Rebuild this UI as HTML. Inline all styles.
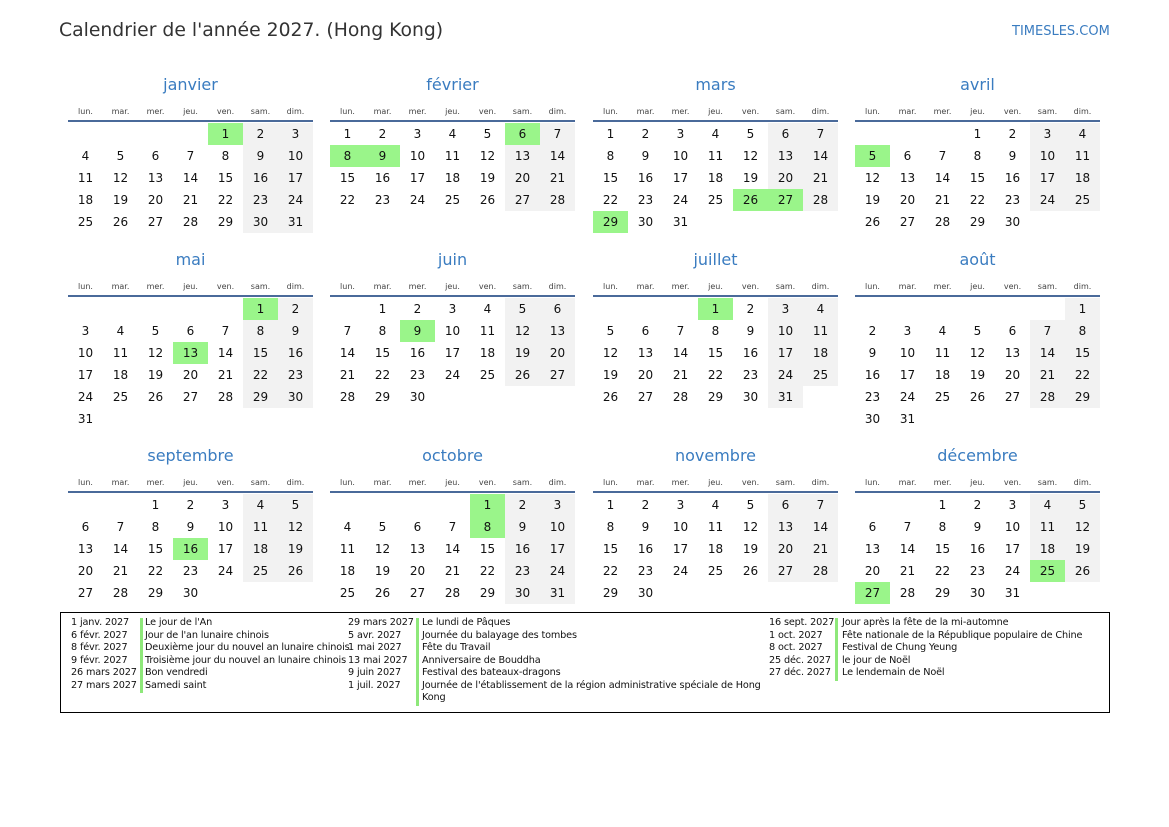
<!DOCTYPE html>
<html><head><meta charset="utf-8"><style>
*{margin:0;padding:0;box-sizing:border-box}
body{width:1169px;height:827px;background:#fff;position:relative;font-family:"DejaVu Sans","Liberation Sans",sans-serif;color:#111;overflow:hidden}
.ttl{position:absolute;left:59px;top:20px;font-size:18.8px;color:#333}
.site{position:absolute;left:1012px;top:24px;font-size:13px;color:#3a7cc0}
.m{position:absolute;width:245px}
.m h2{font-weight:normal;font-size:16px;color:#3a7cc0;text-align:center;height:20px;line-height:20px;margin-top:-10px}
.lb{display:flex;font-size:8px;color:#444;margin-top:12px;height:10px;line-height:10px}
.lb span{width:35px;text-align:center}
.ln{height:2px;background:#4a6a9a;margin-top:3px}
.g{display:flex;flex-wrap:wrap;width:245px;margin-top:1px}
.g i{font-style:normal;width:35px;height:22px;line-height:22px;text-align:center;font-size:12px}
.g i:nth-child(7n+6):not(:empty),.g i:nth-child(7n):not(:empty){background:#f2f2f2}
.g i.h{background:#9af58a!important}
.leg{position:absolute;left:60px;top:612px;width:1050px;height:101px;border:1px solid #000}
.r{position:absolute;font-size:9.7px;letter-spacing:-0.15px;white-space:nowrap;line-height:12.5px}
.b{position:absolute;width:3px;background:#8ee87a}
</style></head><body>
<div class="ttl">Calendrier de l'année 2027. (Hong Kong)</div>
<div class="site">TIMESLES.COM</div>

<div class="m" style="left:68px;top:85px"><h2>janvier</h2><div class="lb"><span>lun.</span><span>mar.</span><span>mer.</span><span>jeu.</span><span>ven.</span><span>sam.</span><span>dim.</span></div><div class="ln"></div><div class="g"><i></i><i></i><i></i><i></i><i class="h">1</i><i>2</i><i>3</i><i>4</i><i>5</i><i>6</i><i>7</i><i>8</i><i>9</i><i>10</i><i>11</i><i>12</i><i>13</i><i>14</i><i>15</i><i>16</i><i>17</i><i>18</i><i>19</i><i>20</i><i>21</i><i>22</i><i>23</i><i>24</i><i>25</i><i>26</i><i>27</i><i>28</i><i>29</i><i>30</i><i>31</i></div></div>

<div class="m" style="left:330px;top:85px"><h2>février</h2><div class="lb"><span>lun.</span><span>mar.</span><span>mer.</span><span>jeu.</span><span>ven.</span><span>sam.</span><span>dim.</span></div><div class="ln"></div><div class="g"><i>1</i><i>2</i><i>3</i><i>4</i><i>5</i><i class="h">6</i><i>7</i><i class="h">8</i><i class="h">9</i><i>10</i><i>11</i><i>12</i><i>13</i><i>14</i><i>15</i><i>16</i><i>17</i><i>18</i><i>19</i><i>20</i><i>21</i><i>22</i><i>23</i><i>24</i><i>25</i><i>26</i><i>27</i><i>28</i></div></div>

<div class="m" style="left:593px;top:85px"><h2>mars</h2><div class="lb"><span>lun.</span><span>mar.</span><span>mer.</span><span>jeu.</span><span>ven.</span><span>sam.</span><span>dim.</span></div><div class="ln"></div><div class="g"><i>1</i><i>2</i><i>3</i><i>4</i><i>5</i><i>6</i><i>7</i><i>8</i><i>9</i><i>10</i><i>11</i><i>12</i><i>13</i><i>14</i><i>15</i><i>16</i><i>17</i><i>18</i><i>19</i><i>20</i><i>21</i><i>22</i><i>23</i><i>24</i><i>25</i><i class="h">26</i><i class="h">27</i><i>28</i><i class="h">29</i><i>30</i><i>31</i></div></div>

<div class="m" style="left:855px;top:85px"><h2>avril</h2><div class="lb"><span>lun.</span><span>mar.</span><span>mer.</span><span>jeu.</span><span>ven.</span><span>sam.</span><span>dim.</span></div><div class="ln"></div><div class="g"><i></i><i></i><i></i><i>1</i><i>2</i><i>3</i><i>4</i><i class="h">5</i><i>6</i><i>7</i><i>8</i><i>9</i><i>10</i><i>11</i><i>12</i><i>13</i><i>14</i><i>15</i><i>16</i><i>17</i><i>18</i><i>19</i><i>20</i><i>21</i><i>22</i><i>23</i><i>24</i><i>25</i><i>26</i><i>27</i><i>28</i><i>29</i><i>30</i></div></div>

<div class="m" style="left:68px;top:260px"><h2>mai</h2><div class="lb"><span>lun.</span><span>mar.</span><span>mer.</span><span>jeu.</span><span>ven.</span><span>sam.</span><span>dim.</span></div><div class="ln"></div><div class="g"><i></i><i></i><i></i><i></i><i></i><i class="h">1</i><i>2</i><i>3</i><i>4</i><i>5</i><i>6</i><i>7</i><i>8</i><i>9</i><i>10</i><i>11</i><i>12</i><i class="h">13</i><i>14</i><i>15</i><i>16</i><i>17</i><i>18</i><i>19</i><i>20</i><i>21</i><i>22</i><i>23</i><i>24</i><i>25</i><i>26</i><i>27</i><i>28</i><i>29</i><i>30</i><i>31</i></div></div>

<div class="m" style="left:330px;top:260px"><h2>juin</h2><div class="lb"><span>lun.</span><span>mar.</span><span>mer.</span><span>jeu.</span><span>ven.</span><span>sam.</span><span>dim.</span></div><div class="ln"></div><div class="g"><i></i><i>1</i><i>2</i><i>3</i><i>4</i><i>5</i><i>6</i><i>7</i><i>8</i><i class="h">9</i><i>10</i><i>11</i><i>12</i><i>13</i><i>14</i><i>15</i><i>16</i><i>17</i><i>18</i><i>19</i><i>20</i><i>21</i><i>22</i><i>23</i><i>24</i><i>25</i><i>26</i><i>27</i><i>28</i><i>29</i><i>30</i></div></div>

<div class="m" style="left:593px;top:260px"><h2>juillet</h2><div class="lb"><span>lun.</span><span>mar.</span><span>mer.</span><span>jeu.</span><span>ven.</span><span>sam.</span><span>dim.</span></div><div class="ln"></div><div class="g"><i></i><i></i><i></i><i class="h">1</i><i>2</i><i>3</i><i>4</i><i>5</i><i>6</i><i>7</i><i>8</i><i>9</i><i>10</i><i>11</i><i>12</i><i>13</i><i>14</i><i>15</i><i>16</i><i>17</i><i>18</i><i>19</i><i>20</i><i>21</i><i>22</i><i>23</i><i>24</i><i>25</i><i>26</i><i>27</i><i>28</i><i>29</i><i>30</i><i>31</i></div></div>

<div class="m" style="left:855px;top:260px"><h2>août</h2><div class="lb"><span>lun.</span><span>mar.</span><span>mer.</span><span>jeu.</span><span>ven.</span><span>sam.</span><span>dim.</span></div><div class="ln"></div><div class="g"><i></i><i></i><i></i><i></i><i></i><i></i><i>1</i><i>2</i><i>3</i><i>4</i><i>5</i><i>6</i><i>7</i><i>8</i><i>9</i><i>10</i><i>11</i><i>12</i><i>13</i><i>14</i><i>15</i><i>16</i><i>17</i><i>18</i><i>19</i><i>20</i><i>21</i><i>22</i><i>23</i><i>24</i><i>25</i><i>26</i><i>27</i><i>28</i><i>29</i><i>30</i><i>31</i></div></div>

<div class="m" style="left:68px;top:456px"><h2>septembre</h2><div class="lb"><span>lun.</span><span>mar.</span><span>mer.</span><span>jeu.</span><span>ven.</span><span>sam.</span><span>dim.</span></div><div class="ln"></div><div class="g"><i></i><i></i><i>1</i><i>2</i><i>3</i><i>4</i><i>5</i><i>6</i><i>7</i><i>8</i><i>9</i><i>10</i><i>11</i><i>12</i><i>13</i><i>14</i><i>15</i><i class="h">16</i><i>17</i><i>18</i><i>19</i><i>20</i><i>21</i><i>22</i><i>23</i><i>24</i><i>25</i><i>26</i><i>27</i><i>28</i><i>29</i><i>30</i></div></div>

<div class="m" style="left:330px;top:456px"><h2>octobre</h2><div class="lb"><span>lun.</span><span>mar.</span><span>mer.</span><span>jeu.</span><span>ven.</span><span>sam.</span><span>dim.</span></div><div class="ln"></div><div class="g"><i></i><i></i><i></i><i></i><i class="h">1</i><i>2</i><i>3</i><i>4</i><i>5</i><i>6</i><i>7</i><i class="h">8</i><i>9</i><i>10</i><i>11</i><i>12</i><i>13</i><i>14</i><i>15</i><i>16</i><i>17</i><i>18</i><i>19</i><i>20</i><i>21</i><i>22</i><i>23</i><i>24</i><i>25</i><i>26</i><i>27</i><i>28</i><i>29</i><i>30</i><i>31</i></div></div>

<div class="m" style="left:593px;top:456px"><h2>novembre</h2><div class="lb"><span>lun.</span><span>mar.</span><span>mer.</span><span>jeu.</span><span>ven.</span><span>sam.</span><span>dim.</span></div><div class="ln"></div><div class="g"><i>1</i><i>2</i><i>3</i><i>4</i><i>5</i><i>6</i><i>7</i><i>8</i><i>9</i><i>10</i><i>11</i><i>12</i><i>13</i><i>14</i><i>15</i><i>16</i><i>17</i><i>18</i><i>19</i><i>20</i><i>21</i><i>22</i><i>23</i><i>24</i><i>25</i><i>26</i><i>27</i><i>28</i><i>29</i><i>30</i></div></div>

<div class="m" style="left:855px;top:456px"><h2>décembre</h2><div class="lb"><span>lun.</span><span>mar.</span><span>mer.</span><span>jeu.</span><span>ven.</span><span>sam.</span><span>dim.</span></div><div class="ln"></div><div class="g"><i></i><i></i><i>1</i><i>2</i><i>3</i><i>4</i><i>5</i><i>6</i><i>7</i><i>8</i><i>9</i><i>10</i><i>11</i><i>12</i><i>13</i><i>14</i><i>15</i><i>16</i><i>17</i><i>18</i><i>19</i><i>20</i><i>21</i><i>22</i><i>23</i><i>24</i><i class="h">25</i><i>26</i><i class="h">27</i><i>28</i><i>29</i><i>30</i><i>31</i></div></div>

<div class="leg">
<div class="b" style="left:79px;top:5px;height:75px"></div>
<div class="b" style="left:355px;top:5px;height:88px"></div>
<div class="b" style="left:774px;top:5px;height:63px"></div>
<div class="r" style="left:10px;top:4px">1 janv. 2027<br>6 févr. 2027<br>8 févr. 2027<br>9 févr. 2027<br>26 mars 2027<br>27 mars 2027</div>
<div class="r" style="left:84px;top:4px">Le jour de l'An<br>Jour de l'an lunaire chinois<br>Deuxième jour du nouvel an lunaire chinois<br>Troisième jour du nouvel an lunaire chinois<br>Bon vendredi<br>Samedi saint</div>
<div class="r" style="left:287px;top:4px">29 mars 2027<br>5 avr. 2027<br>1 mai 2027<br>13 mai 2027<br>9 juin 2027<br>1 juil. 2027</div>
<div class="r" style="left:361px;top:4px">Le lundi de Pâques<br>Journée du balayage des tombes<br>Fête du Travail<br>Anniversaire de Bouddha<br>Festival des bateaux-dragons<br>Journée de l'établissement de la région administrative spéciale de Hong<br>Kong</div>
<div class="r" style="left:708px;top:4px">16 sept. 2027<br>1 oct. 2027<br>8 oct. 2027<br>25 déc. 2027<br>27 déc. 2027</div>
<div class="r" style="left:781px;top:4px">Jour après la fête de la mi-automne<br>Fête nationale de la République populaire de Chine<br>Festival de Chung Yeung<br>le jour de Noël<br>Le lendemain de Noël</div>
</div>
</body></html>
